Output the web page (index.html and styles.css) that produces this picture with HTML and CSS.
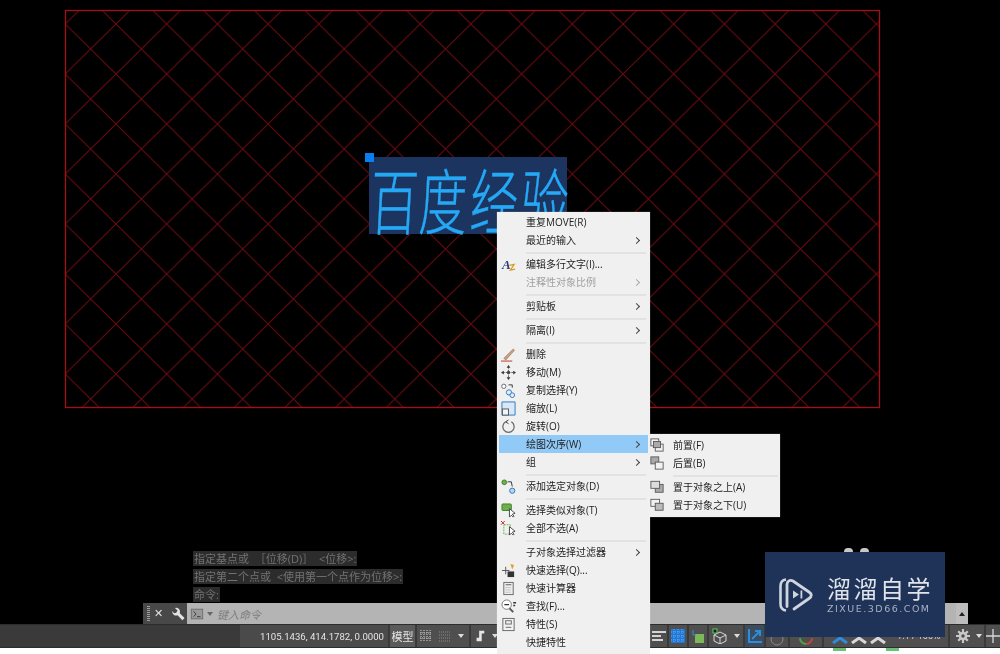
FILE: index.html
```html
<!DOCTYPE html>
<html lang="zh">
<head>
<meta charset="utf-8">
<title>CAD</title>
<link rel="stylesheet" href="styles.css">
</head>
<body>
<div class="app">
  <main class="viewport">
    <svg class="drawing" width="1000" height="624" viewBox="0 0 1000 624">
      <defs>
        <pattern id="hatch" patternUnits="userSpaceOnUse" x="65.3" y="24" width="50.7" height="50">
          <path d="M0 0L50.7 50M0 50L50.7 0" stroke="#6a0a10" stroke-width="1" fill="none"/>
        </pattern>
      </defs>
      <rect x="65.5" y="10.5" width="814" height="397" fill="url(#hatch)" stroke="#a50f16" stroke-width="1.3"/>
      <rect x="369" y="157" width="198" height="77" fill="#1c3560"/>
      <rect x="365" y="153" width="9" height="9" fill="#0a7df0"/>
      <g transform="translate(369,229) skewX(-3) scale(1,1.5)">
        <text class="mtext" x="0 49 100 150" y="0">百度经验</text>
      </g>
    </svg>
    <div class="history">
      <div class="hline"><span>指定基点或&nbsp;&nbsp;［位移(D)］&nbsp;&nbsp;&lt;位移&gt;:</span></div>
      <div class="hline"><span>指定第二个点或&nbsp;&nbsp;&lt;使用第一个点作为位移&gt;:</span></div>
      <div class="hline"><span>命令:</span></div>
    </div>
    <div class="cmdbar">
      <div class="cmdtools">
        <i class="grip"></i><span class="close">✕</span>
        <svg class="ico14" viewBox="0 0 16 16"><path d="M1.500 4.500a4.500 4.500 0 0 0 6 5l5.500 5.500 2.500-2.500L10 7a4.500 4.500 0 0 0-5.500-6l3 3-1.500 2.500-2.500.5z" fill="#e4e4e4"/></svg>
      </div>
      <div class="cmdinput">
        <svg class="ico14" viewBox="0 0 16 16"><rect x="1.500" y="2.500" width="13" height="11" fill="#9a9a9a" stroke="#6a6a6a"/><path d="M4 5l3 3-3 3M8 11h4" stroke="#333" fill="none"/></svg>
        <i class="caret-d"></i>
        <span class="placeholder">键入命令</span>
      </div>
      <div class="cmdend"><i class="caret-u"></i></div>
    </div>
  </main>

  <footer class="status">
    <div class="cell coords">1105.1436, 414.1782, 0.0000</div>
    <div class="cell model">模型</div>
    <div class="cell gridcell">
      <svg class="ico12" viewBox="0 0 12 12"><path d="M1 0v12M4 0v12M7 0v12M10 0v12" stroke="#d8d8d8" stroke-dasharray="1 1"/><path d="M0 3h12M0 8h12" stroke="#bbb" stroke-dasharray="1 1"/></svg>
      <svg class="ico12" viewBox="0 0 12 12"><path d="M0 2h12M0 5h12M0 8h12M0 11h12" stroke="#8c8c8c" stroke-dasharray="1 1"/></svg>
      <i class="caret-d light"></i>
    </div>
    <div class="cell snap"><svg class="ico12" viewBox="0 0 12 14"><path d="M5 1h6v3H8v9H2V9h3z" fill="#e6e6e6"/></svg><i class="caret-d light"></i></div>
    <div class="hidden-run"></div>
    <div class="cell c-lines"><svg class="ico14" viewBox="0 0 14 14"><path d="M0 3h14M0 7h9M0 11h11" stroke="#d4d4d4" stroke-width="2"/></svg></div>
    <div class="cell c-ico"><svg class="ico14" viewBox="0 0 14 14"><rect width="14" height="14" fill="#1f78d8"/><path d="M0 3h14M0 7h14M0 11h14M3 0v14M7 0v14M11 0v14" stroke="#6aa8e8" stroke-dasharray="1 1"/></svg></div>
    <div class="cell c-ico"><svg class="ico14" viewBox="0 0 14 14"><rect x="4" y="5" width="9" height="9" fill="#7cb85a"/><path d="M2 1v5h3" stroke="#3a8fd0" fill="none"/></svg></div>
    <div class="cell c-iso"><svg class="ico16" viewBox="0 0 16 16"><path d="M8 4l6 3v6l-6 3-6-3V7zM2 7l6 3 6-3M8 10v6" stroke="#d8d8d8" fill="none"/><rect x="1" y="1" width="4" height="4" fill="#1c1c1c" stroke="#5cd05c"/></svg><i class="caret-d light"></i></div>
    <div class="cell c-axis"><svg class="ico14" viewBox="0 0 14 14"><path d="M1 0v13h13" stroke="#2a8de0" stroke-width="2" fill="none"/><path d="M4 10l7-7M7 2h5v5" stroke="#2a8de0" stroke-width="2" fill="none"/></svg></div>
    <div class="cell c-dim"><svg class="ico14" viewBox="0 0 14 14"><circle cx="7" cy="6" r="6" fill="none" stroke="#8a8a8a"/></svg></div>
    <div class="cell c-arc"><svg class="ico16" viewBox="0 0 16 16"><path d="M2 7a6 6 0 0 0 6 6" fill="none" stroke="#4f9f45" stroke-width="2"/><path d="M8 13a6 6 0 0 0 6-6" fill="none" stroke="#c0453a" stroke-width="2"/></svg></div>
    <div class="cell c-anno">
      <svg class="chev" viewBox="0 0 16 8"><path d="M1 7l7-5 7 5" fill="none" stroke="#2a8de0" stroke-width="3"/></svg>
      <svg class="chev" viewBox="0 0 16 8"><path d="M1 7l7-5 7 5" fill="none" stroke="#d8d8d8" stroke-width="3"/></svg>
      <svg class="chev" viewBox="0 0 16 8"><path d="M1 7l7-5 7 5" fill="none" stroke="#d8d8d8" stroke-width="3"/></svg>
      <span class="scale">1:1 / 100%</span>
    </div>
    <div class="cell c-gear"><svg class="ico14" viewBox="0 0 16 16"><circle cx="8" cy="8" r="3.500" fill="none" stroke="#c8c8c8" stroke-width="3"/><path d="M8 0v4M8 12v4M0 8h4M12 8h4M2.500 2.500l2.500 2.500M11 11l2.500 2.500M13.500 2.500L11 5M5 11l-2.500 2.500" stroke="#c8c8c8" stroke-width="2.500"/></svg><i class="caret-d light"></i></div>
    <div class="cell c-plus"><svg class="ico14" viewBox="0 0 16 16"><path d="M8 0v16M0 8h16" stroke="#d8d8d8" stroke-width="1.500"/></svg></div>
  </footer>
  <div class="strip"><i class="bit"></i><i class="bit second"></i></div>
</div>

<nav class="menu">
  <div class="mi">重复MOVE(R)</div>
  <div class="mi sub">最近的输入</div>
  <hr>
  <div class="mi"><svg class="mico" viewBox="0 0 16 16"><text x="1" y="13" class="aglyph">A</text><path d="M9 9l5-1-4 6 5-1" stroke="#d89a20" stroke-width="1.300" fill="none"/></svg>编辑多行文字(I)...</div>
  <div class="mi sub dis">注释性对象比例</div>
  <hr>
  <div class="mi sub">剪贴板</div>
  <hr>
  <div class="mi sub">隔离(I)</div>
  <hr>
  <div class="mi"><svg class="mico" viewBox="0 0 16 16"><path d="M3 12L13 2l1.500 1.500L5 14z" fill="#c8a080" stroke="#8a6a50" stroke-width=".5"/><path d="M0 15h12" stroke="#c03020"/></svg>删除</div>
  <div class="mi"><svg class="mico" viewBox="0 0 16 16"><path d="M8 2v12M2 8h12" stroke="#666" stroke-dasharray="2 1"/><path d="M8 0l2 3H6zM8 16l2-3H6zM0 8l3-2v4zM16 8l-3-2v4z" fill="#333"/><circle cx="8" cy="8" r="1.800" fill="#444"/></svg>移动(M)</div>
  <div class="mi"><svg class="mico" viewBox="0 0 16 16"><circle cx="3" cy="3.500" r="2.300" fill="#fff" stroke="#666"/><circle cx="8.500" cy="10" r="2.800" fill="#e4eef8" stroke="#2c78c0"/><circle cx="12" cy="13" r="2.500" fill="#e4eef8" stroke="#2c78c0"/><path d="M8 2h4v3" stroke="#333" fill="none"/></svg>复制选择(Y)</div>
  <div class="mi"><svg class="mico" viewBox="0 0 16 16"><path d="M1 1h14v14H1z" fill="#d8e8f6" stroke="#2c78c0"/><rect x="1.500" y="8.500" width="6.500" height="6.500" fill="#f4f4f4" stroke="#555"/></svg>缩放(L)</div>
  <div class="mi"><svg class="mico" viewBox="0 0 16 16"><path d="M5 3a6 6 0 1 0 6 0" fill="none" stroke="#666" stroke-width="1.300"/><path d="M8 1L5 3l3 2" stroke="#333" fill="none"/></svg>旋转(O)</div>
  <div class="mi sub active">绘图次序(W)</div>
  <div class="mi sub">组</div>
  <hr>
  <div class="mi"><svg class="mico" viewBox="0 0 16 16"><circle cx="3.500" cy="3.500" r="2.500" fill="#6cb04a" stroke="#3f7f2a"/><circle cx="12" cy="12.500" r="2.800" fill="#b8d4ee" stroke="#2c78c0"/><path d="M7 3h4l1 5" stroke="#333" fill="none"/></svg>添加选定对象(D)</div>
  <hr>
  <div class="mi"><svg class="mico" viewBox="0 0 16 16"><rect x="1" y="1" width="10" height="7" rx="1" fill="#6cb04a" stroke="#3f7f2a"/><path d="M9 6v9l2-2 2 2 1-1-2-2 3-1z" fill="#fff" stroke="#444"/></svg>选择类似对象(T)</div>
  <div class="mi"><svg class="mico" viewBox="0 0 16 16"><path d="M0 0l4 4M4 0L0 4" stroke="#d02020"/><rect x="3" y="4" width="7" height="10" fill="none" stroke="#6cb04a" stroke-dasharray="2 1"/><path d="M9 6v9l2-2 2 2 1-1-2-2 3-1z" fill="#fff" stroke="#444"/></svg>全部不选(A)</div>
  <hr>
  <div class="mi sub">子对象选择过滤器</div>
  <div class="mi"><svg class="mico" viewBox="0 0 16 16"><path d="M1 8h8M5 4v8" stroke="#555"/><rect x="7" y="9" width="7" height="6" fill="#333"/><path d="M10 1l4 1-2 5z" fill="#e0a030"/></svg>快速选择(Q)...</div>
  <div class="mi"><svg class="mico" viewBox="0 0 16 16"><rect x="3" y="1.500" width="10" height="13" fill="#eee" stroke="#666"/><path d="M5 4h6" stroke="#555"/><path d="M5 7h6M5 9.500h6M5 12h6" stroke="#999" stroke-dasharray="1 1"/></svg>快速计算器</div>
  <div class="mi"><svg class="mico wide" viewBox="0 0 20 16"><circle cx="7" cy="6" r="5" fill="#fff" stroke="#777"/><path d="M10 10l4 4" stroke="#555" stroke-width="2"/><path d="M4.500 6h5M14 4h3M14 7h2" stroke="#333" stroke-width="1.500"/></svg>查找(F)...</div>
  <div class="mi"><svg class="mico" viewBox="0 0 16 16"><rect x="2" y="1.500" width="12" height="13" fill="#f2f2f2" stroke="#666"/><rect x="5" y="4" width="6" height="3.500" fill="none" stroke="#666"/><path d="M5 11h6" stroke="#666"/></svg>特性(S)</div>
  <div class="mi">快捷特性</div>
</nav>

<nav class="menu submenu">
  <div class="mi"><svg class="mico" viewBox="0 0 16 16"><rect x="1" y="1" width="9" height="8" fill="#f2f2f2" stroke="#555"/><rect x="6" y="7" width="9" height="8" fill="#f2f2f2" stroke="#555"/><rect x="4" y="4" width="8" height="7" fill="#aaa" stroke="#555"/></svg>前置(F)</div>
  <div class="mi"><svg class="mico" viewBox="0 0 16 16"><rect x="1" y="1" width="9" height="8" fill="#aaa" stroke="#555"/><rect x="6" y="7" width="9" height="8" fill="#f2f2f2" stroke="#555"/></svg>后置(B)</div>
  <hr>
  <div class="mi"><svg class="mico" viewBox="0 0 16 16"><rect x="6" y="5" width="9" height="9" fill="#aaa" stroke="#555"/><rect x="1" y="1.500" width="10" height="8" fill="#ddd" stroke="#555"/></svg>置于对象之上(A)</div>
  <div class="mi"><svg class="mico" viewBox="0 0 16 16"><rect x="1" y="1.500" width="10" height="8" fill="#f2f2f2" stroke="#555"/><rect x="6" y="6" width="9" height="8" fill="#bbb" stroke="#555"/></svg>置于对象之下(U)</div>
</nav>

<aside class="brand">
  <i class="ear"></i><i class="ear right"></i>
  <svg class="brand-logo" viewBox="0 0 34 34"><path d="M7 1.500C3.500 2 1.500 4 1.500 8v18c0 4 2 6 5.500 6.500" fill="none" stroke="#cfd4de" stroke-width="2.600"/><path d="M8 28.500V6.500c0-3.500 3-5 6-3.500l16 11c3 2 3 4.500 0 6.500L15 31" fill="none" stroke="#cfd4de" stroke-width="2.800" stroke-linecap="round"/><path d="M14 12.500l6 4-6 4zM21.500 12.500h1.800v8h-1.800z" fill="#cfd4de"/></svg>
  <div class="brand-text">
    <div class="brand-cn">溜溜自学</div>
    <div class="brand-en">ZIXUE.3D66.COM</div>
  </div>
</aside>
</body>
</html>
```

FILE: styles.css
```css
* { box-sizing: border-box; }
html, body { margin: 0; padding: 0; height: 100%; background: #000; overflow: hidden; }
body { position: relative; width: 1000px; height: 654px; font-family: "Open Sans", "Noto Sans CJK SC", "Liberation Sans", sans-serif; font-size: 10px; color: #222; filter: blur(.35px); }

.app { display: flex; flex-direction: column; height: 654px; }
.viewport { position: relative; height: 624px; background: #000; display: flex; flex-direction: column; justify-content: flex-end; padding-left: 143px; padding-right: 32px; }
.drawing { position: absolute; left: 0; top: 0; }
.mtext { font-family: "Noto Sans CJK SC", sans-serif; font-weight: 300; font-size: 48px; fill: #25a8f5; stroke: #25a8f5; stroke-width: .3px; }

.history { position: relative; padding-left: 50px; display: flex; flex-direction: column; gap: 3px; margin-bottom: 1px; }
.hline { height: 15px; line-height: 15px; font-size: 11px; color: #727272; }
.hline span { background: #2c2c2c; display: inline-block; padding: 0 1px; }

.cmdbar { position: relative; display: flex; height: 21px; background: #b4b4b4; }
.cmdtools { width: 44px; background: #484848; display: flex; align-items: center; gap: 4px; padding-left: 4px; flex: none; }
.grip { width: 3px; height: 15px; background: repeating-linear-gradient(#a0a0a0 0 1px, #484848 1px 2px); }
.close { color: #e4e4e4; font-size: 11px; font-family: "DejaVu Sans", sans-serif; font-weight: 700; margin-right: 4px; }
.cmdinput { flex: 1; display: flex; align-items: center; gap: 3px; padding-left: 3px; }
.placeholder { color: #7e7e7e; font-style: italic; font-size: 11px; margin-left: 1px; }
.cmdend { width: 12px; display: flex; align-items: center; justify-content: center; background: #bdbdbd; }
.caret-d { width: 0; height: 0; border: 3px solid transparent; border-top: 4px solid #666; border-bottom: 0; flex: none; }
.caret-d.light { border-top-color: #ddd; }
.caret-u { width: 0; height: 0; border: 3px solid transparent; border-bottom: 4px solid #222; border-top: 0; }

.ico12 { width: 12px; height: 12px; flex: none; }
.ico14 { width: 14px; height: 14px; flex: none; }
.ico16 { width: 16px; height: 16px; flex: none; }

.status { height: 24px; background: #3a3a3a; display: flex; align-items: stretch; padding-left: 240px; border-top: 1px solid #2c2c2c; border-bottom: 1px solid #2c2c2c; overflow: hidden; }
.cell { flex: none; background: #4f4f4f; display: flex; align-items: center; justify-content: center; color: #e4e4e4; border-right: 2px solid #3a3a3a; }
.coords { width: 150px; background: #4a4a4a; font-family: "Roboto", "Liberation Sans", sans-serif; font-size: 9.600px; justify-content: flex-end; padding-right: 4px; }
.model { width: 27px; background: #5a5a5a; font-size: 11px; }
.gridcell { width: 54px; gap: 7px; justify-content: flex-start; padding-left: 3px; }
.snap { width: 26px; border-right: 0; justify-content: flex-start; padding-left: 3px; gap: 6px; }
.hidden-run { width: 153px; flex: none; background: #4f4f4f; }
.c-lines { width: 19px; }
.c-ico { width: 20px; }
.c-iso { width: 36px; gap: 6px; }
.c-axis { width: 21px; background: #3c4c5c; }
.c-dim { width: 24px; align-items: flex-end; }
.c-arc { width: 34px; align-items: flex-end; }
.c-anno { width: 126px; justify-content: flex-start; padding-left: 8px; gap: 3px; align-items: flex-end; padding-bottom: 3px; }
.chev { width: 16px; height: 8px; flex: none; }
.scale { font-size: 9px; line-height: 12px; margin-left: 8px; white-space: nowrap; color: #ddd; position: relative; bottom: 2px; }
.c-gear { width: 36px; gap: 6px; padding-left: 4px; }
.c-plus { width: 14px; border-right: 0; }

.strip { height: 6px; background: #fff; display: flex; padding-left: 833px; gap: 40px; }
.bit { width: 13px; height: 3px; background: #6cc07a; }

.menu { position: absolute; left: 497px; top: 212px; width: 153px; height: 442px; background: #f0f0f0; box-shadow: 0 0 1px rgba(255,255,255,.5); padding: 1px 2px 0; }
.mi { position: relative; height: 18px; line-height: 18px; padding-left: 27px; font-size: 10px; color: #222; white-space: nowrap; }
.mi.sub::after { content: ""; position: absolute; right: 9px; top: 7px; width: 4px; height: 4px; border-top: 1px solid #444; border-right: 1px solid #444; transform: rotate(45deg); }
.dis { color: #a0a0a0; }
.dis.sub::after { border-color: #aaa; }
.active { background: #91c9f7; }
.menu hr { height: 2px; margin: 3px 2px 1px 27px; border: 0; background: #e2e2e2; }
.mico { position: absolute; left: 2px; top: 2px; width: 15px; height: 15px; overflow: visible; }
.mico.wide { width: 19px; left: 1px; }
.aglyph { font: italic 700 14px "Liberation Serif", serif; fill: #2a3a7a; }

.submenu { left: 649px; top: 434px; width: 131px; height: 83px; padding: 2px 0; }
.submenu .mi { padding-left: 24px; }
.submenu hr { margin-left: 24px; }
.submenu .mico { left: 1px; width: 14px; height: 14px; }

.brand { position: absolute; left: 765px; top: 552px; width: 180px; height: 85px; background: #1f3257; display: flex; align-items: center; gap: 14px; padding-left: 14px; color: #d5dae4; }
.ear { position: absolute; left: 79px; top: -4px; width: 9px; height: 4px; border-radius: 5px 5px 0 0; background: #c8c8c8; }
.ear.right { left: 95px; }
.brand-logo { width: 34px; height: 34px; flex: none; }
.brand-text { display: flex; flex-direction: column; gap: 2px; }
.brand-cn { font-family: "Noto Sans CJK SC", sans-serif; font-size: 24px; line-height: 26px; letter-spacing: 2.500px; color: #dfe3ea; }
.brand-en { font-family: "DejaVu Sans", sans-serif; font-size: 9.500px; line-height: 12px; letter-spacing: 1.500px; color: #a8b2c6; }
```
